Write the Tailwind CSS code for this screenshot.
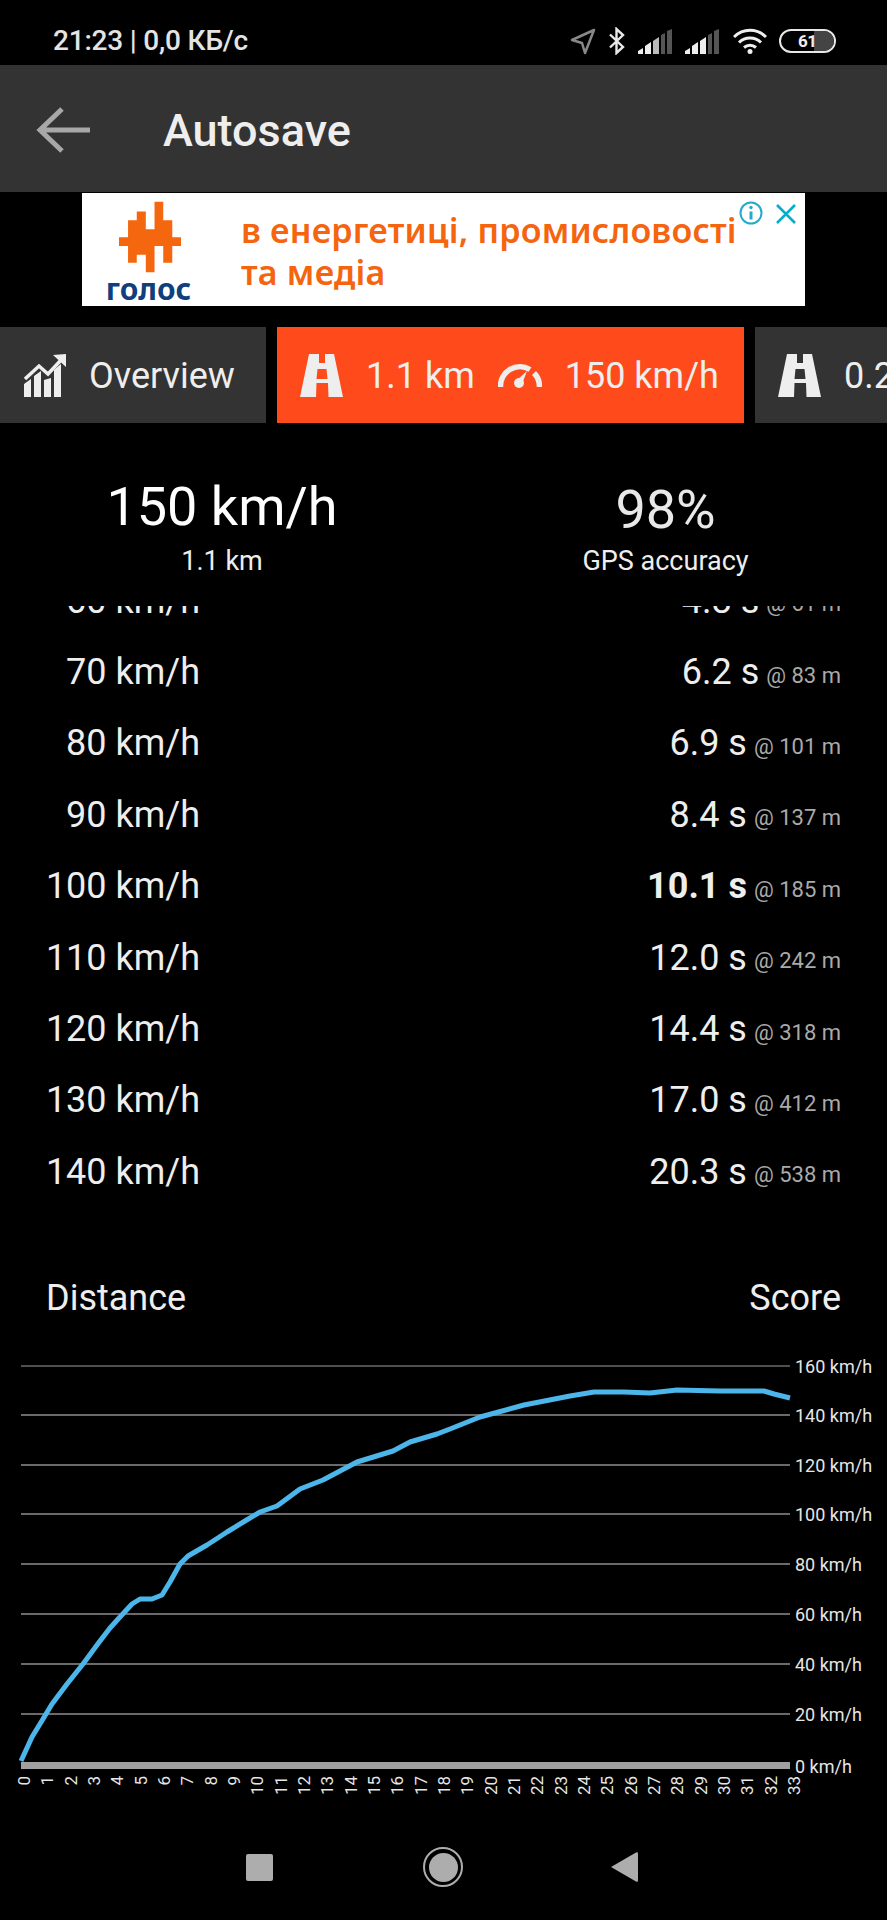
<!DOCTYPE html>
<html lang="uk">
<head>
  <meta charset="UTF-8">
  <title>Autosave</title>
  <meta name="viewport" content="width=device-width, initial-scale=1.0">
  <script src="https://cdn.jsdelivr.net/npm/@tailwindcss/browser@4"></script>
</head>
<body class="bg-black text-[#eeeeee] font-[Roboto,sans-serif]">
  <div class="w-[887px] h-[1920px] overflow-hidden flex flex-col">

    <!-- status bar -->
    <div class="h-[65px] shrink-0 flex items-center justify-between pl-[53px] pr-[51px] pt-[17px]">
      <span class="text-[28px] leading-[30px] font-medium text-[#e4e4e4] tracking-[-0.2px]">21:23 | 0,0 КБ/с</span>
      <div class="flex items-center">
        <svg class="w-[26px] h-[27px]" viewBox="0 0 26 27" fill="none"><path d="M24 2 2 12l10 3 3 10z" stroke="#888888" stroke-width="2.5" stroke-linejoin="round"/></svg>
        <svg class="w-[18px] h-[28px] ml-[12px]" viewBox="0 0 18 28" fill="none"><path d="M2 7.5 15 20 8.5 26V2L15 8 2 20.500" stroke="#e8e8e8" stroke-width="2.400"/></svg>
        <svg class="w-[34px] h-[25px] ml-[12px]" viewBox="0 0 34 25"><path d="M0 25v-3l5-3v6zM7 25v-8l6-4v12z" fill="#eeeeee"/><path d="M15 25V12l6-4v17z" fill="#bbbbbb"/><path d="M23 25V6l4-2v21zM29 25V2l5-2v25z" fill="#555555"/></svg>
        <svg class="w-[34px] h-[25px] ml-[13px]" viewBox="0 0 34 25"><path d="M0 25v-3l5-3v6zM7 25v-8l6-4v12zM15 25V12l6-4v17z" fill="#eeeeee"/><path d="M23 25V6l4-2v21zM29 25V2l5-2v25z" fill="#555555"/></svg>
        <svg class="w-[34px] h-[26px] ml-[14px]" viewBox="0 0 34 26" fill="none" stroke="#eeeeee" stroke-width="3"><path d="M1 9c9-9 23-9 32 0M6 14.500c6-6 16-6 22 0M11 19.500c3.500-3 8.500-3 12 0"/><circle cx="17" cy="23.500" r="2.500" fill="#eeeeee" stroke="none"/></svg>
        <div class="relative w-[57px] h-[24px] ml-[12px] rounded-full border-2 border-[#e8e8e8] overflow-hidden flex items-center">
          <div class="absolute right-0 top-0 bottom-0 w-[20px] bg-[#444444]"></div>
          <span class="relative ml-[17px] text-[17px] leading-none font-bold text-[#eeeeee] tracking-[-0.5px]">61</span>
        </div>
      </div>
    </div>

    <!-- app bar -->
    <div class="h-[127px] shrink-0 bg-[#333333] flex items-center">
      <svg class="w-[56px] h-[48px] ml-[36px] mt-[2px]" viewBox="0 0 56 48" fill="none" stroke="#a8a8a8" stroke-width="5"><path d="M54 24H5M26 3 4 24l22 21"/></svg>
      <span class="ml-[71px] mt-[4px] text-[45px] leading-none font-medium text-[#eeeeee]">Autosave</span>
    </div>

    <!-- ad banner -->
    <div class="relative mt-px ml-[82px] w-[723px] h-[113px] shrink-0 bg-white flex">
      <div class="w-[137px] flex flex-col items-center">
        <svg class="w-[62px] h-[72px] mt-[8px] ml-[-2px]" viewBox="25 18 185 210"><polygon fill="#f4670f" points="131,18 157,18 157,73 184,73 184,124 210,124 210,150 184,150 184,200 157,200 157,150 131,150 131,228 105,228 105,176 78,176 78,200 52,200 52,150 25,150 25,124 52,124 52,73 78,73 78,47 105,47 105,100 131,100"/></svg>
        <span class="mt-[1px] ml-[-4px] text-[30px] leading-[30px] font-bold text-[#0f3f7c] font-['Noto_Sans']">голос</span>
      </div>
      <div class="ml-[22px] pt-[16px] text-[34px] leading-[42px] font-semibold text-[#f5640f] font-['Noto_Sans'] tracking-[0.2px]">
        <div class="whitespace-nowrap">в енергетиці, промисловості</div>
        <div>та медіа</div>
      </div>
      <svg class="absolute right-[42px] top-[8px] w-[24px] h-[24px]" viewBox="0 0 24 24" fill="none" stroke="#25aacc" stroke-width="2"><circle cx="12" cy="12" r="10.500"/><path d="M12 10.500v8" stroke-width="3"/><circle cx="12" cy="6.500" r="1.700" fill="#25aacc" stroke="none"/></svg>
      <svg class="absolute right-[9px] top-[11px] w-[20px] h-[20px]" viewBox="0 0 20 20" fill="none" stroke="#00aecd" stroke-width="2.500"><path d="m1 1 18 18M19 1 1 19"/></svg>
    </div>

    <!-- section tabs -->
    <div class="mt-[21px] h-[96px] shrink-0 flex gap-[11px] overflow-hidden">
      <div class="w-[266px] shrink-0 bg-[#333333] flex items-center pl-[24px]">
        <svg class="w-[43px] h-[44px]" viewBox="0 0 43 44">
          <path d="M0 44V31l7-5v18zM10 44V23l7-5v26zM20 44V27l7-2v19zM30 44V17l7-6v33z" fill="#eeeeee"/>
          <path d="M1 26 15 13l9 8L38 6" fill="none" stroke="#eeeeee" stroke-width="3.500"/>
          <path d="M29 2 42 1v13z" fill="#eeeeee"/>
        </svg>
        <span class="ml-[22px] mt-[2px] text-[36px] leading-none">Overview</span>
      </div>
      <div class="w-[467px] shrink-0 bg-[#ff4b1b] flex items-center pl-[23px]">
        <svg class="w-[43px] h-[43px]" viewBox="0 0 43 43"><path fill="#eeeeee" fill-rule="evenodd" d="M9 0h25l9 43H0zM19 0h6v9h-6zM17.500 15h9l1 10h-11zM16.500 29h11.500l.5 14H16z"/></svg>
        <span class="ml-[23px] mt-[2px] text-[36px] leading-none">1.1 km</span>
        <svg class="w-[44px] h-[27px] ml-[23px]" viewBox="0 0 44 27"><path d="M2.500 25A19.500 19.500 0 0 1 32 7.500M36 11a19.500 19.500 0 0 1 5.500 14" fill="none" stroke="#eeeeee" stroke-width="5.500"/><circle cx="21" cy="21" r="5" fill="#eeeeee"/><path d="m19 18 10-9-5 13z" fill="#eeeeee"/></svg>
        <span class="ml-[23px] mt-[2px] text-[36px] leading-none">150 km/h</span>
      </div>
      <div class="flex-1 bg-[#333333] flex items-center pl-[23px] overflow-hidden">
        <svg class="w-[43px] h-[43px] shrink-0" viewBox="0 0 43 43"><path fill="#eeeeee" fill-rule="evenodd" d="M9 0h25l9 43H0zM19 0h6v9h-6zM17.500 15h9l1 10h-11zM16.500 29h11.500l.5 14H16z"/></svg>
        <span class="ml-[23px] mt-[2px] text-[36px] leading-none whitespace-nowrap">0.2 km</span>
      </div>
    </div>

    <!-- run summary -->
    <div class="h-[183px] shrink-0 flex">
      <div class="w-[444px] flex flex-col items-center pt-[53px]">
        <span class="text-[54px] leading-[62px] text-white">150 km/h</span>
        <span class="mt-[7px] text-[27px] leading-[32px]">1.1 km</span>
      </div>
      <div class="w-[443px] flex flex-col items-center pt-[56px]">
        <span class="text-[54px] leading-[62px] text-[#e8e8e8]">98%</span>
        <span class="mt-[4px] text-[27px] leading-[32px]">GPS accuracy</span>
      </div>
    </div>

    <!-- speed table, scrolled -->
    <div class="h-[612px] shrink-0 overflow-hidden">
      <div id="rows" class="mt-[-41px]"></div>
    </div>

    <div class="flex justify-between pl-[46px] pr-[46px] mt-[59px] text-[36px] leading-[42px] text-[#eeeeee]">
      <span>Distance</span>
      <span>Score</span>
    </div>

    <!-- speed/distance chart -->
    <svg id="chart" class="w-[887px] h-[470px] mt-[29px] shrink-0" viewBox="0 1349 887 470" font-family="Roboto, sans-serif"></svg>

    <!-- android nav bar -->
    <div class="flex items-center pl-[246px] mt-[29px]">
      <div class="w-[27px] h-[27px] rounded-[2px] bg-[#adadad]"></div>
      <div class="ml-[150px] w-[40px] h-[40px] rounded-full border-[2.500px] border-[#adadad] flex items-center justify-center">
        <div class="w-[29px] h-[29px] rounded-full bg-[#adadad]"></div>
      </div>
      <svg class="ml-[148px] w-[27px] h-[30px]" viewBox="0 0 27 30"><path d="M0 15 25 .5q2-1 2 1v27q0 2-2 1z" fill="#adadad"/></svg>
    </div>
  </div>

  <script>
    const rows = [
      ['60 km/h', '4.8 s', '@ 61 m'],
      ['70 km/h', '6.2 s', '@ 83 m'],
      ['80 km/h', '6.9 s', '@ 101 m'],
      ['90 km/h', '8.4 s', '@ 137 m'],
      ['100 km/h', '10.1 s', '@ 185 m', true],
      ['110 km/h', '12.0 s', '@ 242 m'],
      ['120 km/h', '14.4 s', '@ 318 m'],
      ['130 km/h', '17.0 s', '@ 412 m'],
      ['140 km/h', '20.3 s', '@ 538 m']
    ];

    const rowList = document.getElementById('rows');
    rows.forEach(r => {
      const row = document.createElement('div');
      row.className = 'h-[71.400px] flex items-center';

      const speed = document.createElement('span');
      speed.className = 'w-[200px] text-right text-[36px] leading-none';
      speed.textContent = r[0];

      const time = document.createElement('span');
      time.className = r[3] ? 'ml-auto text-[36px] leading-none font-bold' : 'ml-auto text-[36px] leading-none';
      time.textContent = r[1];

      const dist = document.createElement('span');
      dist.className = 'ml-[7px] mr-[46px] mt-[7px] text-[22px] leading-none text-[#aaaaaa]';
      dist.textContent = r[2];

      row.append(speed, time, dist);
      rowList.appendChild(row);
    });

    const chart = document.getElementById('chart');
    const gridYs = [1767, 1715, 1665, 1615, 1565, 1515, 1466, 1416, 1367];
    const curve = [[21,1762],[32,1738],[43,1720],[52,1705],[67,1685],[83,1665],[100,1642],[110,1629],[120,1618],[132,1605],[140,1600],[152,1600],[162,1596],[170,1583],[180,1565],[188,1557],[207,1546],[227,1533],[245,1522],[260,1513],[277,1507],[300,1490],[323,1481],[357,1463],[393,1452],[410,1443],[437,1435],[450,1430],[480,1418],[524,1406],[570,1397],[594,1393],[624,1393],[650,1394],[677,1391],[720,1392],[764,1392],[774,1395],[790,1399]];

    let svg = '';
    gridYs.forEach((y, i) => {
      if (i === 0) {
        svg += `<rect x="21" y="1763" width="769" height="7" fill="#a0a0a0"/>`;
      } else {
        svg += `<line x1="21" x2="790" y1="${y}" y2="${y}" stroke="#6a6a6a" stroke-width="${i === 8 ? 1.5 : 2}"/>`;
      }
      svg += `<text x="795" y="${y + 7}" font-size="18" fill="#e6e6e6">${i * 20} km/h</text>`;
    });
    svg += `<polyline fill="none" stroke="#4cb5e9" stroke-width="5" stroke-linejoin="round" points="${curve.map(p => p.join(',')).join(' ')}"/>`;
    for (let i = 0; i <= 33; i++) {
      const x = 24 + i * 23.33;
      svg += `<text transform="translate(${x + 6},1777) rotate(-90)" text-anchor="end" font-size="17" fill="#e6e6e6">${i}</text>`;
    }
    chart.innerHTML = svg;
  </script>
</body>
</html>
